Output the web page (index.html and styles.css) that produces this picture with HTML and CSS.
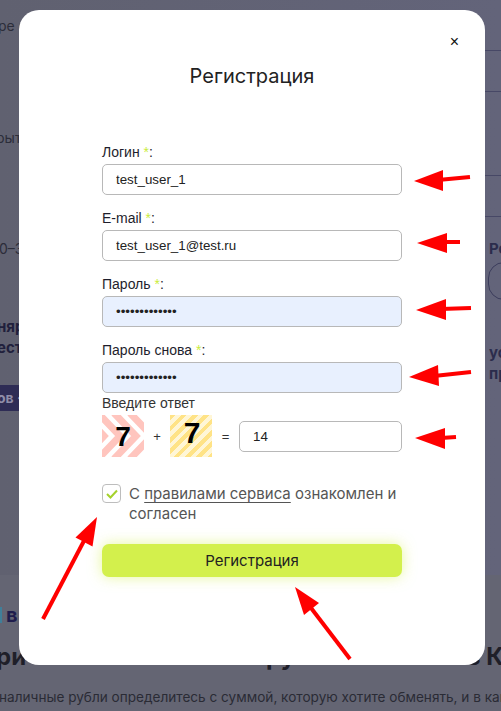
FILE: index.html
```html
<!DOCTYPE html>
<html lang="ru">
<head>
<meta charset="utf-8">
<title>Регистрация</title>
<link rel="stylesheet" href="styles.css">
</head>
<body>
<div class="page">
  <div class="top">
    <div class="left-col">
      <p class="frag f1">ре обмена валюты</p>
      <p class="frag f2">рыты ежедневно</p>
      <p class="frag f3">0–30 минут</p>
      <p class="frag bold f4">няр<br>ест</p>
      <div class="dark-bar">ов · отзывы</div>
    </div>
    <div class="right-col">
      <div class="rule r1"></div>
      <div class="rule r2"></div>
      <div class="rule r3"></div>
      <div class="rule r4"></div>
      <p class="rtext bold rt1">Ре</p>
      <div class="rbox"></div>
      <p class="rtext bold rt2">ус</p>
      <p class="rtext bold rt3">пр</p>
    </div>
  </div>
  <div class="bottom">
    <p class="sub"><span class="sliver"></span>в</p>
    <h2 class="heading"><span>ри</span><span>ру</span><span>з Ка</span></h2>
    <p class="para">наличные рубли определитесь с суммой, которую хотите обменять, и в какой валюте</p>
  </div>

  <div class="modal">
    <div class="modal-head"><button class="close" type="button">×</button></div>
    <h1 class="title">Регистрация</h1>
    <form class="form">
      <div class="field">
        <label class="label">Логин <span class="req">*</span>:</label>
        <input class="input" type="text" value="test_user_1">
      </div>
      <div class="field">
        <label class="label">E-mail <span class="req">*</span>:</label>
        <input class="input" type="text" value="test_user_1@test.ru">
      </div>
      <div class="field">
        <label class="label">Пароль <span class="req">*</span>:</label>
        <input class="input filled" type="password" value="1234567890123">
      </div>
      <div class="field">
        <label class="label">Пароль снова <span class="req">*</span>:</label>
        <input class="input filled" type="password" value="1234567890123">
      </div>
      <div class="captcha">
        <div class="label cap-label">Введите ответ</div>
        <div class="cap-row">
          <div class="cap-img cap-pink">
            <svg width="42" height="42" viewBox="0 0 42 42">
              <g fill="none" stroke="#ffc5be" stroke-width="7">
                <polyline points="-20,-2 2,21 -20,44"/>
                <polyline points="-4,-2 18,21 -4,44"/>
                <polyline points="12,-2 34,21 12,44"/>
                <polyline points="28,-2 50,21 28,44"/>
              </g>
            </svg>
            <span class="digit d1">7</span>
          </div>
          <span class="op">+</span>
          <div class="cap-img cap-yellow"><span class="digit d2">7</span></div>
          <span class="op op-eq">=</span>
          <input class="input answer" type="text" value="14">
        </div>
      </div>
      <div class="agree">
        <span class="checkbox">
          <svg width="12" height="10" viewBox="0 0 12 10"><polyline points="1,5 4.5,8.5 11,1.5" fill="none" stroke="#a5d22b" stroke-width="2"/></svg>
        </span>
        <p class="agree-text">С <a class="rules" href="#">правилами сервиса</a> ознакомлен и согласен</p>
      </div>
      <button class="submit" type="button">Регистрация</button>
    </form>
  </div>

  <svg class="arrows" width="501" height="711" viewBox="0 0 501 711">
    <g fill="#ff0000" stroke="#ff0000">
      <line x1="438" y1="180" x2="470" y2="177" stroke-width="4"/>
      <polygon points="414,181 443,170 443,191" stroke="none"/>

      <line x1="443" y1="242" x2="460" y2="242" stroke-width="4"/>
      <polygon points="417,243 447,233 447,253" stroke="none"/>

      <line x1="441" y1="309" x2="471" y2="308" stroke-width="4"/>
      <polygon points="416,310 446,299 446,320" stroke="none"/>

      <line x1="434" y1="376" x2="471" y2="372" stroke-width="4"/>
      <polygon points="409,377 438,365 439,386" stroke="none"/>

      <line x1="441" y1="438" x2="456" y2="437" stroke-width="4"/>
      <polygon points="415,438 445,428 445,449" stroke="none"/>

      <line x1="43" y1="619" x2="86" y2="537" stroke-width="4"/>
      <polygon points="97,517 75.5,537.5 92.5,546.5" stroke="none"/>

      <line x1="350" y1="659" x2="308" y2="604" stroke-width="4"/>
      <polygon points="295,587 319,603 304,615" stroke="none"/>
    </g>
  </svg>
</div>
</body>
</html>
```

FILE: styles.css
```css
* { box-sizing: border-box; }
html, body { margin: 0; padding: 0; }
body {
  font-family: Inter, "Noto Sans", "Liberation Sans", sans-serif;
  background: #62637a;
}
p, h1, h2 { margin: 0; }

.page {
  position: relative;
  width: 501px;
  height: 711px;
  overflow: hidden;
}

/* background page (dimmed) */
.top {
  height: 575px;
  display: flex;
  justify-content: space-between;
  background: linear-gradient(90deg, #606170 0%, #63647a 100%);
}
.left-col {
  width: 60px;
  overflow: hidden;
  white-space: nowrap;
  color: #2c2d3a;
  font-size: 14px;
}
.frag { line-height: 20px; margin-left: -2px; }
.f1 { margin-top: 16px; }
.f2 { margin-top: 92px; margin-left: -4px; }
.f3 { margin-top: 91px; margin-left: -1px; }
.bold { font-weight: 700; }
.f4 { margin-top: 57px; line-height: 21px; font-size: 15px; color: #20203c; margin-left: -3px; }
.dark-bar {
  margin-top: 27px;
  height: 26px;
  line-height: 26px;
  background: #2e2c55;
  color: #8e8da8;
  font-weight: 700;
  font-size: 14px;
  text-indent: -3px;
}

.right-col {
  width: 16px;
  overflow: hidden;
  white-space: nowrap;
  color: #2b2c4c;
}
.rule { height: 1px; background: #474866; }
.r1 { margin-top: 50px; }
.r2 { margin-top: 40px; }
.r3 { margin-top: 83px; }
.r4 { margin-top: 40px; }
.rtext { font-size: 15px; line-height: 18px; padding-left: 4px; }
.rt1 { margin-top: 23px; }
.rbox {
  margin-top: 4px;
  margin-left: 3px;
  width: 60px;
  height: 38px;
  border: 1px solid #3b3c5c;
  border-radius: 16px;
}
.rt2 { margin-top: 42px; line-height: 21px; }
.rt3 { line-height: 21px; }

.bottom {
  height: 136px;
  background: #646573;
  padding-top: 28px;
  white-space: nowrap;
  overflow: hidden;
}
.sub {
  font-size: 20px;
  line-height: 24px;
  font-weight: 700;
  color: #1f1d4d;
  display: flex;
  align-items: center;
  gap: 4px;
}
.sliver { display: inline-block; width: 2px; height: 16px; background: #3f7f9a; }
.heading {
  margin-top: 15px;
  display: grid;
  grid-template-columns: 270px 202px auto;
  font-size: 24px;
  line-height: 30px;
  font-weight: 700;
  color: #1f1f29;
  margin-left: -4px;
}
.para {
  margin-top: 15px;
  font-size: 13.6px;
  line-height: 20px;
  color: #2a2b35;
  margin-left: -1px;
}

/* modal */
.modal {
  position: absolute;
  left: 19px;
  top: 10px;
  width: 466px;
  height: 655px;
  background: #fff;
  border-radius: 20px;
  padding: 24px 0 0;
}
.modal-head {
  display: flex;
  justify-content: flex-end;
  padding-right: 26px;
  height: 16px;
}
.close {
  border: 0;
  background: none;
  padding: 0;
  font: 400 16px/16px "Liberation Sans", Arial, sans-serif;
  color: #111;
  cursor: pointer;
}
.title {
  margin-top: 14px;
  text-align: center;
  font-size: 20px;
  line-height: 24px;
  font-weight: 400;
  color: #222;
}
.form {
  margin: 57px 83px 0;
  display: flex;
  flex-direction: column;
}
.field { display: flex; flex-direction: column; margin-bottom: 16px; }
.field:nth-child(4) { margin-bottom: 3px; }
.label {
  font: 14px/15px "Liberation Sans", Arial, sans-serif;
  color: #1e1e2c;
  margin-bottom: 4px;
}
.req { color: #c9ec3c; }
.input {
  display: block;
  width: 100%;
  height: 31px;
  border: 1px solid #b8b8b8;
  border-radius: 5px;
  padding: 0 13px;
  font: 13.33px "Liberation Sans", Arial, sans-serif;
  color: #222;
  background: #fff;
  outline: none;
}
.input.filled { background: #e8f0fe; }

.cap-label { color: #333; margin-bottom: 4px; }
.cap-row { display: flex; align-items: center; height: 42px; }
.cap-img {
  flex: none;
  position: relative;
  width: 42px;
  height: 42px;
  display: flex;
  align-items: center;
  justify-content: center;
  overflow: hidden;
}
.cap-pink { background: #fff; }
.cap-pink svg { position: absolute; left: 0; top: 0; }
.cap-yellow {
  background: repeating-linear-gradient(135deg, #ffe386 0 4px, #fff6d6 4px 8px);
}
.digit {
  position: relative;
  font: 700 28px/1 "Liberation Sans", Arial, sans-serif;
  color: #000;
}
.d1 { top: 1px; }
.d2 { font-size: 30px; top: -3px; left: 1px; }
.op {
  flex: none;
  width: 26px;
  text-align: center;
  font: 13px "Liberation Sans", Arial, sans-serif;
  color: #333;
}
.op-eq { width: 27px; }
.answer { flex: 1; width: auto; min-width: 0; }

.agree {
  margin-top: 27px;
  display: flex;
  align-items: flex-start;
  gap: 8px;
}
.checkbox {
  flex: none;
  width: 19px;
  height: 19px;
  border: 1px solid #bdbdbd;
  border-radius: 4px;
  display: flex;
  align-items: center;
  justify-content: center;
}
.agree-text {
  font-size: 15px;
  line-height: 20px;
  color: #555;
}
.rules {
  color: #555;
  text-decoration: underline;
  text-underline-offset: 3px;
  text-decoration-thickness: 1px;
}
.submit {
  margin-top: 20px;
  height: 33px;
  width: 100%;
  border: 0;
  border-radius: 7px;
  background: #d3f04c;
  box-shadow: 0 0 14px rgba(211, 240, 76, 0.55);
  font-family: Inter, "Noto Sans", sans-serif;
  font-size: 15px;
  color: #222;
  cursor: pointer;
}

.arrows {
  position: absolute;
  left: 0;
  top: 0;
  pointer-events: none;
}
```
